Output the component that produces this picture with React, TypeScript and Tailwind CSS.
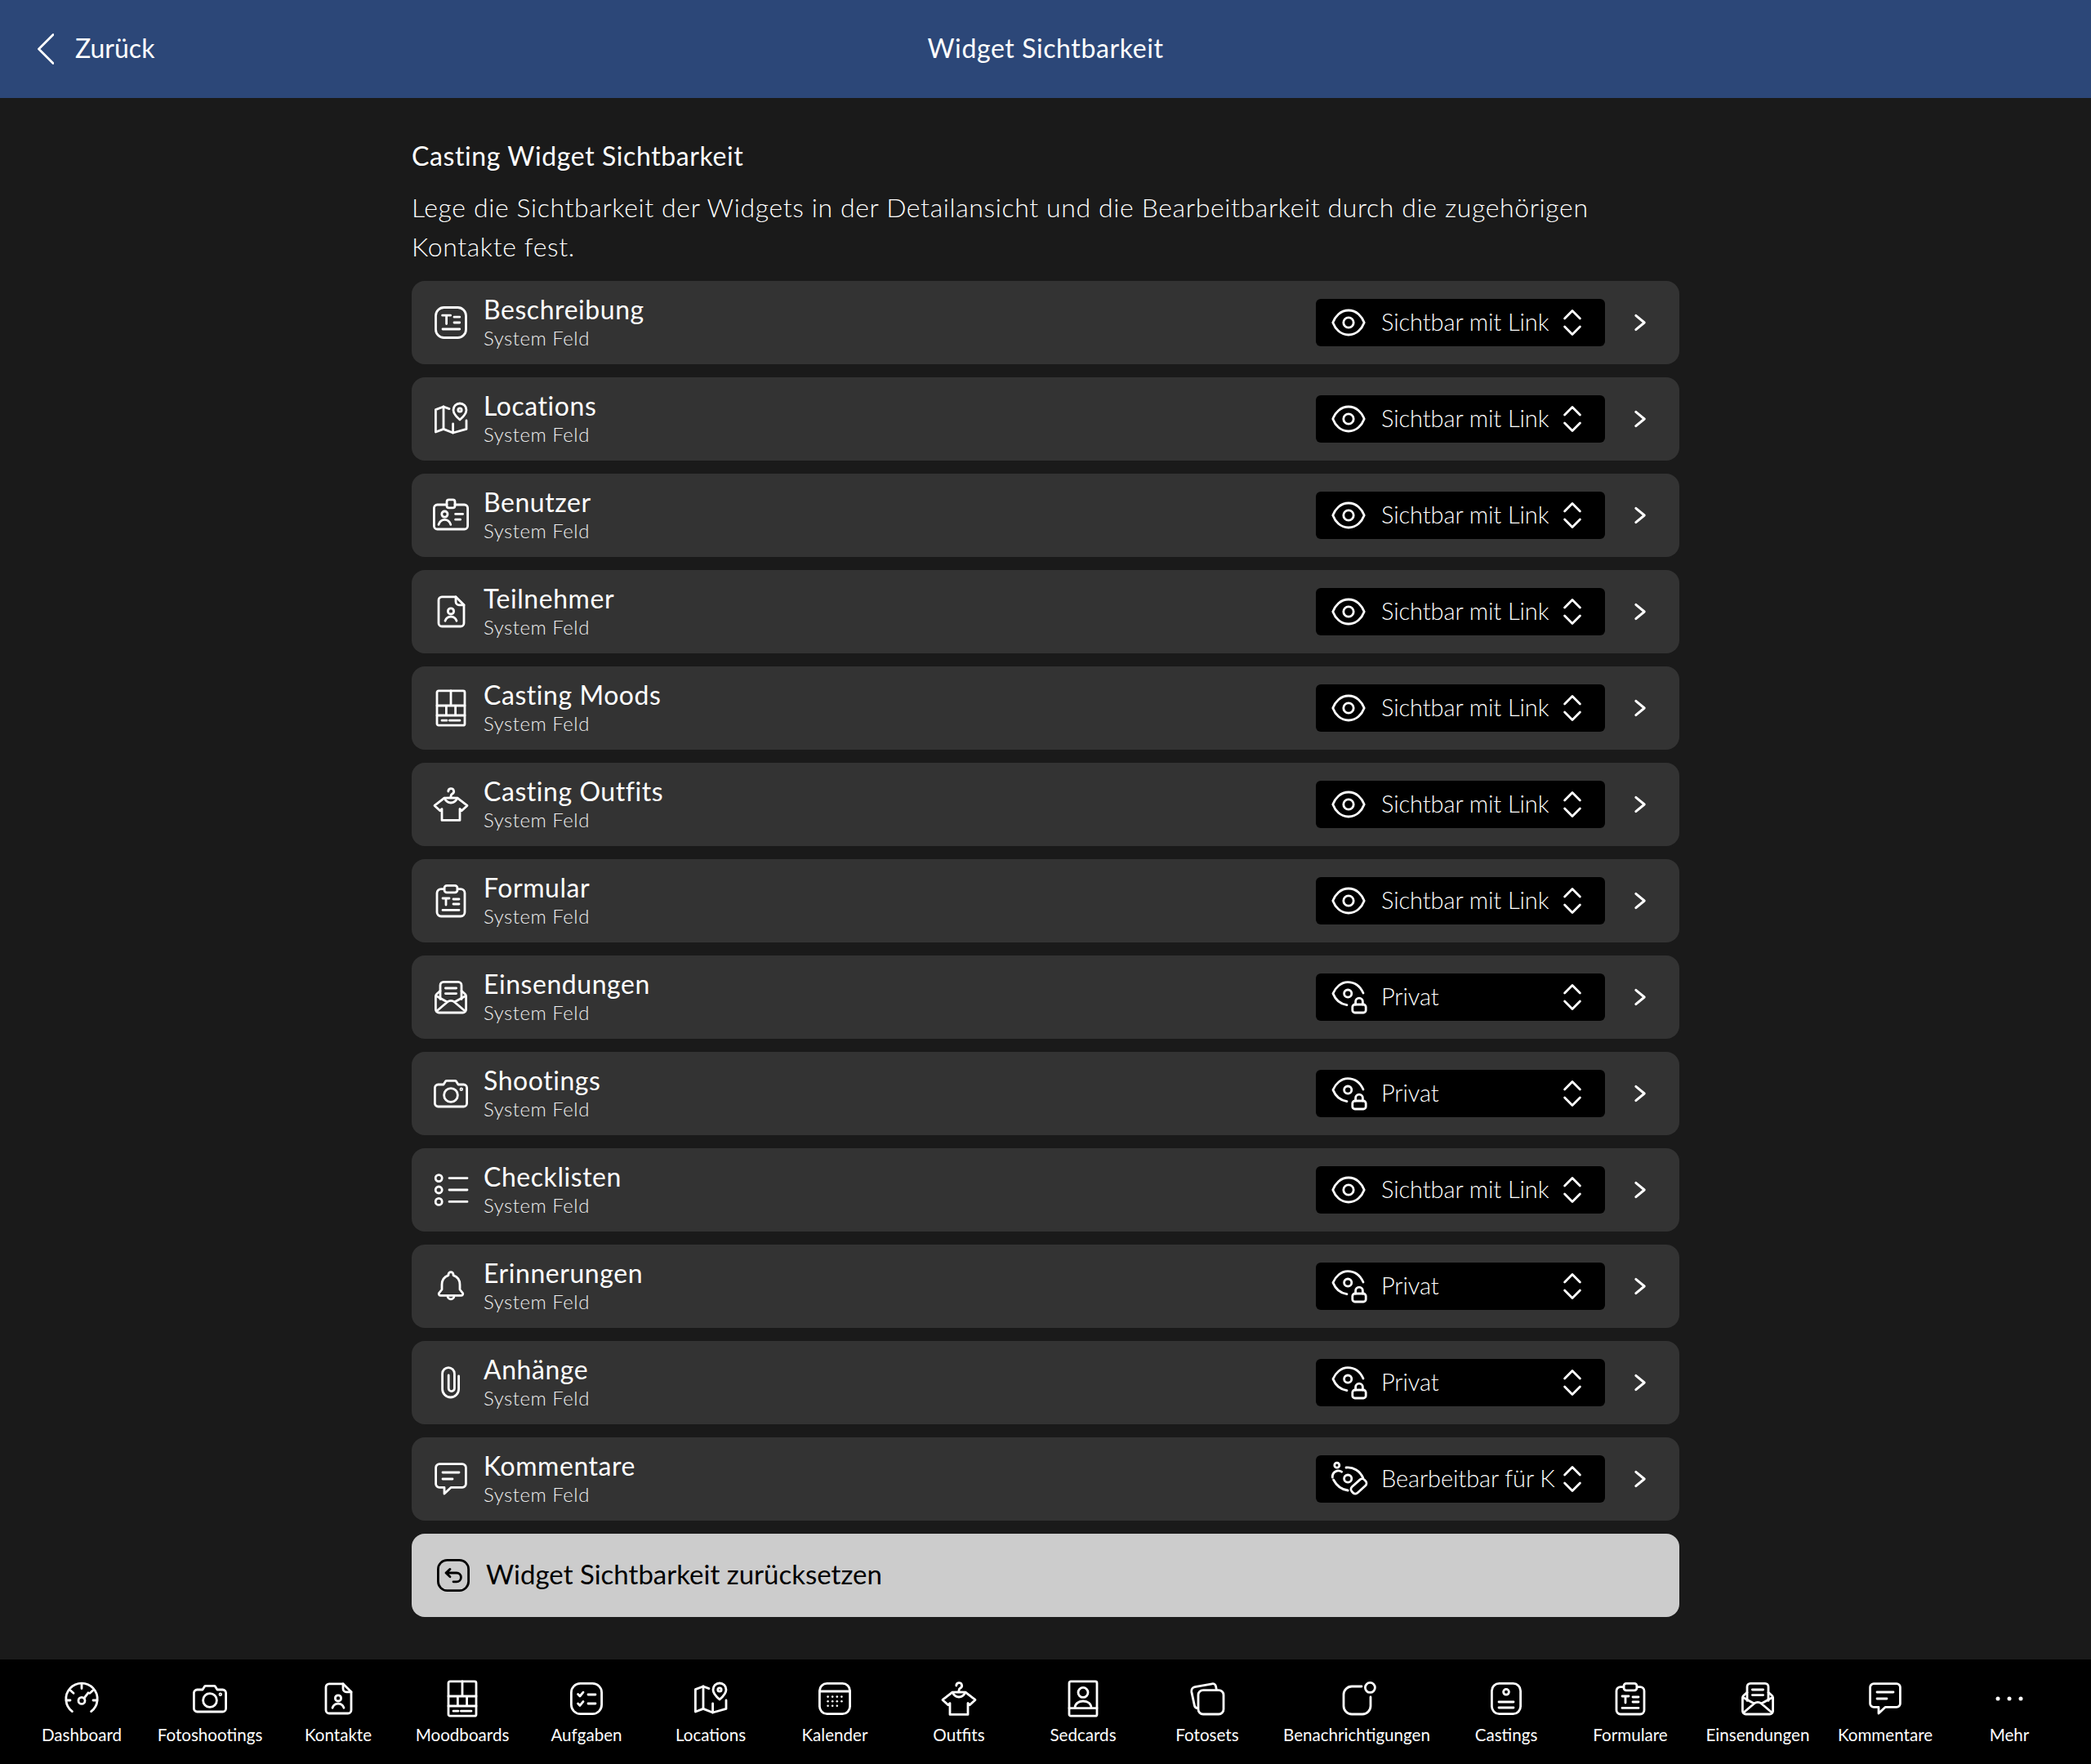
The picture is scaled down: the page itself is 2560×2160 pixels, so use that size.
import type { ReactNode } from "react";

type Vis = "link" | "privat" | "edit";

function Ico({ children, sw = 1.4 }: { children: ReactNode; sw?: number }) {
  return (
    <svg viewBox="0 0 24 24" fill="none" stroke="currentColor" strokeWidth={sw} strokeLinecap="round" strokeLinejoin="round" className="w-12 h-12 shrink-0">
      {children}
    </svg>
  );
}

const TextBox = () => (
  <Ico>
    <rect x="2.75" y="2.75" width="18.5" height="18.5" rx="5" />
    <path d="M6.8 7.6h5M9.3 7.6v5.2M14 8.6h3.4M14 12h3.4M7 16h10.4" />
  </Ico>
);
const MapPin = () => (
  <Ico>
    <path d="M11 5.8 7.5 4.5 2.7 6.3V20l4.8-1.8 5.8 2.3 8.2-2.3V13" />
    <path d="M7.5 4.5v13.7M13.3 15v5.5" />
    <path d="M17.5 2.5a4 4 0 0 0-4 4c0 2.6 4 6 4 6s4-3.4 4-6a4 4 0 0 0-4-4z" />
    <circle cx="17.5" cy="6.5" r="1.1" />
  </Ico>
);
const Badge = () => (
  <Ico>
    <path d="M9.5 5.5H3.7a2 2 0 0 0-2 2v11a2 2 0 0 0 2 2h16.6a2 2 0 0 0 2-2v-11a2 2 0 0 0-2-2h-5.8" />
    <rect x="9.5" y="2.4" width="5" height="5" rx="1.3" />
    <circle cx="8.2" cy="11.3" r="1.8" />
    <path d="M4.5 17.7c.7-2 2.3-3 3.7-3s3 1 3.7 3M14.8 11.2h4.5M14.8 14.6h3" />
  </Ico>
);
const DocPerson = () => (
  <Ico>
    <path d="M6.5 2.9H15l5 5V19a2 2 0 0 1-2 2H6.5a2 2 0 0 1-2-2V4.9a2 2 0 0 1 2-2z" />
    <path d="M15 2.9v3a2 2 0 0 0 2 2h3" />
    <circle cx="12" cy="11.7" r="1.8" />
    <path d="M8.5 17.6c.7-1.8 2-2.5 3.5-2.5s2.8.7 3.5 2.5" />
  </Ico>
);
const Board = () => (
  <Ico>
    <rect x="3.5" y="1.4" width="17" height="21.2" rx="1" />
    <path d="M3.5 10.5h17M12 1.4v9.1M3.5 16.5h17M9.2 10.5v6M14.8 10.5v6M6.5 19.6h3M11.2 19.6h6.3" />
  </Ico>
);
const Shirt = () => (
  <Ico>
    <path d="M10.4 4a1.7 1.7 0 1 1 2.5 1.5c-.6.4-.9.8-.9 1.4v1" />
    <path d="M12 7.9l4 .2 6 4.6-3.4 3.2-1.1-1.1v6.9h-11v-6.9l-1.1 1.1L2 12.7l6-4.6z" />
    <path d="M8 8.1c1 2 2.5 2.9 4 2.9s3-.9 4-2.9" />
  </Ico>
);
const Clipboard = () => (
  <Ico>
    <path d="M8 4.8H6a2.5 2.5 0 0 0-2.5 2.5V19A2.5 2.5 0 0 0 6 21.5h12a2.5 2.5 0 0 0 2.5-2.5V7.3A2.5 2.5 0 0 0 18 4.8h-2" />
    <rect x="8" y="2.7" width="8" height="4.2" rx="1.5" />
    <path d="M7 10.5h4M9 10.5v4M13.5 11H17M13.5 14H17M7 17.7h10" />
  </Ico>
);
const Envelope = () => (
  <Ico>
    <path d="M5.5 13.2V4.7a2 2 0 0 1 2-2h9a2 2 0 0 1 2 2v8.5" />
    <path d="M5.5 8.2 3.4 10a2 2 0 0 0-.7 1.5v8a2 2 0 0 0 2 2h14.6a2 2 0 0 0 2-2v-8a2 2 0 0 0-.7-1.5l-2.1-1.8" />
    <path d="M3.2 20.6 9.8 15a3.5 3.5 0 0 1 4.4 0l6.6 5.6M3 11.3 9.8 15M21 11.3 14.2 15M8.7 6.5h6.6M8.7 9.8h6.6" />
  </Ico>
);
const Camera = () => (
  <Ico>
    <path d="M4.2 6.5h3.3l1.2-1.9a1 1 0 0 1 .8-.4h5a1 1 0 0 1 .8.4l1.2 1.9h3.3a2 2 0 0 1 2 2V18a2 2 0 0 1-2 2H4.2a2 2 0 0 1-2-2V8.5a2 2 0 0 1 2-2z" />
    <circle cx="12" cy="13" r="4.2" />
    <circle cx="18.4" cy="9.4" r=".4" />
  </Ico>
);
const ListIco = () => (
  <Ico>
    <circle cx="4.6" cy="4.8" r="2" />
    <circle cx="4.6" cy="12" r="2" />
    <circle cx="4.6" cy="19.2" r="2" />
    <path d="M11 4.8h11M11 12h11M11 19.2h11" />
  </Ico>
);
const Bell = () => (
  <Ico>
    <path d="M12 3.3a1.5 1.5 0 0 0-1.5 1.5v.5C8 6.2 6.5 8.3 6.5 11v3l-1.6 2a1 1 0 0 0 .8 1.7h12.6a1 1 0 0 0 .8-1.7l-1.6-2v-3c0-2.7-1.5-4.8-4-5.7v-.5A1.5 1.5 0 0 0 12 3.3z" />
    <path d="M10 17.9a2 2 0 0 0 4 0" />
  </Ico>
);
const Clip = () => (
  <Ico>
    <path d="M16.8 8v8a5 5 0 0 1-10 0V6.5a3.7 3.7 0 0 1 7.4 0v9a1.8 1.8 0 0 1-3.6 0V7.5" />
  </Ico>
);
const Comment = () => (
  <Ico>
    <path d="M5 2.8h14a2.2 2.2 0 0 1 2.2 2.2v10a2.2 2.2 0 0 1-2.2 2.2h-7L8 21v-3.8H5A2.2 2.2 0 0 1 2.8 15V5A2.2 2.2 0 0 1 5 2.8z" />
    <path d="M7 8h10M7 12h6" />
  </Ico>
);
const Reset = () => (
  <Ico>
    <rect x="2.7" y="2.7" width="18.6" height="18.6" rx="5.5" />
    <path d="M7.5 10.5H14a2.7 2.7 0 0 1 0 5.4h-2M10 8.2l-2.5 2.3 2.5 2.4" />
  </Ico>
);
const Gauge = () => (
  <Ico>
    <path d="M6.2 19.8A9.6 9.6 0 1 1 17.8 19.8" />
    <circle cx="12" cy="13.2" r="2" />
    <path d="M13.4 11.8l2.6-3.4M12 3.4v2.4M5.2 7l1.8 1.6M18.8 7 17 8.6M2.6 13h2.4M19 13h2.4" />
  </Ico>
);
const Tasks = () => (
  <Ico>
    <rect x="2.7" y="2.7" width="18.6" height="18.6" rx="5.5" />
    <path d="M6.8 9.3l1.2 1.2 2-2.4M6.8 15l1.2 1.2 2-2.4M13 9.5h4.5M13 15h4.5" />
  </Ico>
);
const Calendar = () => (
  <Ico>
    <rect x="2.7" y="2.7" width="18.6" height="18.6" rx="4.5" />
    <path d="M2.7 7.5h18.6" />
    <g fill="currentColor" stroke="none">
      <circle cx="7.8" cy="10.8" r=".65" /><circle cx="10.6" cy="10.8" r=".65" /><circle cx="13.4" cy="10.8" r=".65" /><circle cx="16.2" cy="10.8" r=".65" />
      <circle cx="7.8" cy="13.6" r=".65" /><circle cx="10.6" cy="13.6" r=".65" /><circle cx="13.4" cy="13.6" r=".65" /><circle cx="16.2" cy="13.6" r=".65" />
      <circle cx="7.8" cy="16.4" r=".65" /><circle cx="10.6" cy="16.4" r=".65" /><circle cx="13.4" cy="16.4" r=".65" />
    </g>
  </Ico>
);
const Sedcard = () => (
  <Ico>
    <rect x="3.5" y="1.4" width="17" height="21.2" rx="1" />
    <circle cx="12" cy="8.2" r="3" />
    <path d="M7 17.8c0-2.6 2-4.3 5-4.3s5 1.7 5 4.3M3.5 17.8h17" />
  </Ico>
);
const Photosets = () => (
  <Ico>
    <rect x="6.5" y="6.8" width="15.5" height="14.7" rx="3" />
    <path d="M6 17.8a2 2 0 0 1-1.8-1.6L2.4 7.8a2.6 2.6 0 0 1 2-3L15 2.9a2 2 0 0 1 2.3 1.6l.4 2.3" />
  </Ico>
);
const Notify = () => (
  <Ico>
    <path d="M15 4.5H9a5 5 0 0 0-5 5v7a5 5 0 0 0 5 5h6.5a5 5 0 0 0 5-5V11" />
    <circle cx="20.2" cy="5.2" r="3" />
  </Ico>
);
const Casting = () => (
  <Ico>
    <rect x="3.2" y="2.7" width="17.6" height="18.6" rx="4.5" />
    <circle cx="12" cy="7.9" r="1.7" />
    <path d="M7.5 14h9M7.5 17.5h9" />
  </Ico>
);
const More = () => (
  <Ico>
    <g fill="currentColor" stroke="none">
      <circle cx="5" cy="12" r="1.25" /><circle cx="12" cy="12" r="1.25" /><circle cx="19" cy="12" r="1.25" />
    </g>
  </Ico>
);

const Eye = () => (
  <Ico>
    <path d="M12 4.5C7 4.5 3.8 8.3 2.4 12c1.4 3.7 4.6 7.5 9.6 7.5s8.2-3.8 9.6-7.5C20.2 8.3 17 4.5 12 4.5z" />
    <circle cx="12" cy="12" r="3.1" />
  </Ico>
);
const EyeLock = () => (
  <Ico>
    <path d="M21 9.5C19 5 15.5 2.8 11.5 2.8S4 6 2.5 9.8C4 13.5 7 16.2 11 16.8" />
    <circle cx="11.6" cy="9.8" r="2.3" />
    <rect x="14.4" y="16.5" width="8.2" height="5" rx="1.5" />
    <path d="M16.3 16.5v-1.7a2.2 2.2 0 0 1 4.4 0v1.7" />
  </Ico>
);
const EyeEdit = () => (
  <Ico>
    <circle cx="4.9" cy="3.6" r="1.5" />
    <path d="M2.2 11a3.6 3.6 0 0 1 5.6-3.4M10.5 5c4.4-.5 8.4 2 10.4 6.3M2.8 12.5c1.8 3.4 5 6 8.8 6.5" />
    <circle cx="11.6" cy="11.8" r="2.3" />
    <rect x="13" y="14" width="10.5" height="5" rx="2" transform="rotate(-42 18.2 16.5)" />
  </Ico>
);
const UpDown = () => (
  <Ico>
    <path d="M7.3 9.5 12 4.8l4.7 4.7M7.3 14.5l4.7 4.7 4.7-4.7" />
  </Ico>
);
const Next = () => (
  <Ico sw={1.5}>
    <path d="M9.4 7.7 14.6 12l-5.2 4.3" />
  </Ico>
);

const VIS: Record<Vis, { label: string; icon: ReactNode }> = {
  link: { label: "Sichtbar mit Link", icon: <Eye /> },
  privat: { label: "Privat", icon: <EyeLock /> },
  edit: { label: "Bearbeitbar für K", icon: <EyeEdit /> },
};

const ROWS: { title: string; icon: ReactNode; vis: Vis }[] = [
  { title: "Beschreibung", icon: <TextBox />, vis: "link" },
  { title: "Locations", icon: <MapPin />, vis: "link" },
  { title: "Benutzer", icon: <Badge />, vis: "link" },
  { title: "Teilnehmer", icon: <DocPerson />, vis: "link" },
  { title: "Casting Moods", icon: <Board />, vis: "link" },
  { title: "Casting Outfits", icon: <Shirt />, vis: "link" },
  { title: "Formular", icon: <Clipboard />, vis: "link" },
  { title: "Einsendungen", icon: <Envelope />, vis: "privat" },
  { title: "Shootings", icon: <Camera />, vis: "privat" },
  { title: "Checklisten", icon: <ListIco />, vis: "link" },
  { title: "Erinnerungen", icon: <Bell />, vis: "privat" },
  { title: "Anhänge", icon: <Clip />, vis: "privat" },
  { title: "Kommentare", icon: <Comment />, vis: "edit" },
];

const TABS: { label: string; icon: ReactNode; w: string }[] = [
  { label: "Dashboard", icon: <Gauge />, w: "w-[152px]" },
  { label: "Fotoshootings", icon: <Camera />, w: "w-[162px]" },
  { label: "Kontakte", icon: <DocPerson />, w: "w-[152px]" },
  { label: "Moodboards", icon: <Board />, w: "w-[152px]" },
  { label: "Aufgaben", icon: <Tasks />, w: "w-[152px]" },
  { label: "Locations", icon: <MapPin />, w: "w-[152px]" },
  { label: "Kalender", icon: <Calendar />, w: "w-[152px]" },
  { label: "Outfits", icon: <Shirt />, w: "w-[152px]" },
  { label: "Sedcards", icon: <Sedcard />, w: "w-[152px]" },
  { label: "Fotosets", icon: <Photosets />, w: "w-[152px]" },
  { label: "Benachrichtigungen", icon: <Notify />, w: "w-[214px]" },
  { label: "Castings", icon: <Casting />, w: "w-[152px]" },
  { label: "Formulare", icon: <Clipboard />, w: "w-[152px]" },
  { label: "Einsendungen", icon: <Envelope />, w: "w-[160px]" },
  { label: "Kommentare", icon: <Comment />, w: "w-[152px]" },
  { label: "Mehr", icon: <More />, w: "w-[152px]" },
];

export default function App() {
  return (
    <div className="h-[2160px] flex flex-col bg-[#1a1a1a] text-white font-['Lato',sans-serif]">
      {/* Top bar */}
      <header className="h-[120px] shrink-0 bg-[#2c4778] grid grid-cols-3 items-center">
        <div className="flex items-center pl-[46px] gap-[26px]">
          <svg viewBox="0 0 20 38" fill="none" stroke="currentColor" strokeWidth={2.8} strokeLinecap="round" strokeLinejoin="round" className="w-5 h-[38px]">
            <path d="M19 1.5 1.5 19 19 36.5" />
          </svg>
          <span className="text-[32px] leading-[46px] pb-[2px]">Zurück</span>
        </div>
        <h1 className="text-[32px] leading-[46px] pb-[2px] tracking-[0.6px] text-center whitespace-nowrap">Widget Sichtbarkeit</h1>
      </header>

      <main className="flex-1 w-[1552px] mx-auto pt-[48px]">
        <h2 className="text-[32px] leading-[46px] tracking-[0.6px]">Casting Widget Sichtbarkeit</h2>
        <p className="text-[32px] leading-[47.5px] tracking-[0.62px] font-light mt-[16px] mb-[19px]">
          Lege die Sichtbarkeit der Widgets in der Detailansicht und die Bearbeitbarkeit durch die zugehörigen Kontakte fest.
        </p>

        <div className="flex flex-col gap-4">
          {ROWS.map((r) => (
            <div key={r.title} className="h-[102px] bg-[#333333] rounded-2xl flex items-center pl-6 pr-6">
              {r.icon}
              <div className="ml-4 flex flex-col">
                <span className="text-[32px] leading-[35px] tracking-[0.55px]">{r.title}</span>
                <span className="mt-[3px] text-[24px] leading-[30px] tracking-[0.5px] font-light text-[#f0f0f0]">System Feld</span>
              </div>
              <div className="ml-auto w-[354px] h-[58px] bg-black rounded-md flex items-center pl-4 pr-4">
                {VIS[r.vis].icon}
                <span className="ml-4 flex-1 min-w-0 pb-[2px] text-[29px] tracking-[-0.1px] font-light whitespace-nowrap">{VIS[r.vis].label}</span>
                <UpDown />
              </div>
              <div className="ml-[19px]"><Next /></div>
            </div>
          ))}

          <button className="h-[102px] bg-[#cccccc] rounded-2xl flex items-center pl-[27px] text-black">
            <Reset />
            <span className="ml-[16px] pb-[2px] text-[33px]">Widget Sichtbarkeit zurücksetzen</span>
          </button>
        </div>
      </main>

      {/* Tab bar */}
      <nav className="h-[128px] shrink-0 bg-black flex pl-6 pt-6">
        {TABS.map((t) => (
          <div key={t.label} className={`${t.w} shrink-0 flex flex-col items-center`}>
            {t.icon}
            <span className="mt-[6px] text-[20.6px] leading-7 whitespace-nowrap">{t.label}</span>
          </div>
        ))}
      </nav>
    </div>
  );
}
